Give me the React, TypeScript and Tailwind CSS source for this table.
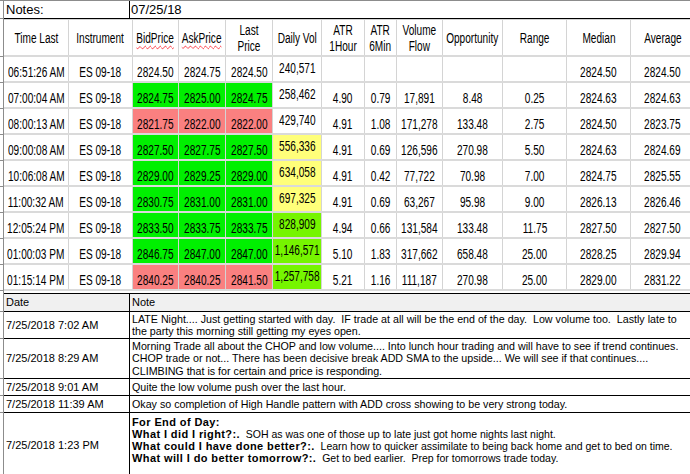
import React from 'react';

type Tone = 'none' | 'up' | 'down';
type VolTone = 'none' | 'warm' | 'hot';

interface Quote {
  time: string;
  bid: string;
  ask: string;
  last: string;
  vol: string;
  atr1: string;
  atr6: string;
  flow: string;
  opp: string;
  range: string;
  median: string;
  avg: string;
  tone: Tone;
  volTone: VolTone;
}

const quotes: Quote[] = [
  { time: '06:51:26 AM', bid: '2824.50', ask: '2824.75', last: '2824.50', vol: '240,571', atr1: '', atr6: '', flow: '', opp: '', range: '', median: '2824.50', avg: '2824.50', tone: 'none', volTone: 'none' },
  { time: '07:00:04 AM', bid: '2824.75', ask: '2825.00', last: '2824.75', vol: '258,462', atr1: '4.90', atr6: '0.79', flow: '17,891', opp: '8.48', range: '0.25', median: '2824.63', avg: '2824.63', tone: 'up', volTone: 'none' },
  { time: '08:00:13 AM', bid: '2821.75', ask: '2822.00', last: '2822.00', vol: '429,740', atr1: '4.91', atr6: '1.08', flow: '171,278', opp: '133.48', range: '2.75', median: '2824.50', avg: '2823.75', tone: 'down', volTone: 'none' },
  { time: '09:00:08 AM', bid: '2827.50', ask: '2827.75', last: '2827.50', vol: '556,336', atr1: '4.91', atr6: '0.69', flow: '126,596', opp: '270.98', range: '5.50', median: '2824.63', avg: '2824.69', tone: 'up', volTone: 'warm' },
  { time: '10:06:08 AM', bid: '2829.00', ask: '2829.25', last: '2829.00', vol: '634,058', atr1: '4.91', atr6: '0.42', flow: '77,722', opp: '70.98', range: '7.00', median: '2824.75', avg: '2825.55', tone: 'up', volTone: 'warm' },
  { time: '11:00:32 AM', bid: '2830.75', ask: '2831.00', last: '2831.00', vol: '697,325', atr1: '4.91', atr6: '0.69', flow: '63,267', opp: '95.98', range: '9.00', median: '2826.13', avg: '2826.46', tone: 'up', volTone: 'warm' },
  { time: '12:05:24 PM', bid: '2833.50', ask: '2833.75', last: '2833.75', vol: '828,909', atr1: '4.94', atr6: '0.66', flow: '131,584', opp: '133.48', range: '11.75', median: '2827.50', avg: '2827.50', tone: 'up', volTone: 'hot' },
  { time: '01:00:03 PM', bid: '2846.75', ask: '2847.00', last: '2847.00', vol: '1,146,571', atr1: '5.10', atr6: '1.83', flow: '317,662', opp: '658.48', range: '25.00', median: '2828.25', avg: '2829.94', tone: 'up', volTone: 'hot' },
  { time: '01:15:14 PM', bid: '2840.25', ask: '2840.25', last: '2841.50', vol: '1,257,758', atr1: '5.21', atr6: '1.16', flow: '111,187', opp: '270.98', range: '25.00', median: '2829.00', avg: '2831.22', tone: 'down', volTone: 'hot' },
];

const toneBg: Record<Tone, string> = { none: 'bg-white', up: 'bg-[#00f000]', down: 'bg-[#fa8080]' };
const volBg: Record<VolTone, string> = { none: 'bg-white', warm: 'bg-[#ffff7a]', hot: 'bg-[#76f500]' };

// column widths of the quote grid, left to right
const cols = ['w-[65px]', 'w-[64px]', 'w-[46px]', 'w-[47px]', 'w-[47px]', 'w-[49px]', 'w-[43px]', 'w-[32px]', 'w-[46px]', 'w-[60px]', 'w-[64px]', 'w-[64px]', 'w-[64px]'];

// the pasted grid is squashed sideways, so the text is narrowed the same way
function Narrow({ children, className = '' }: { children: React.ReactNode; className?: string }) {
  return <span className={`inline-block origin-center scale-x-[0.72] whitespace-nowrap ${className}`}>{children}</span>;
}

function Line({ outer = '', inner = '', tick = true, children }: { outer?: string; inner?: string; tick?: boolean; children?: React.ReactNode }) {
  return (
    <div className={`flex shrink-0 ${outer}`}>
      <div className={`w-[4px] shrink-0 border-r border-[#8c8c8c] ${tick ? 'border-b' : ''}`} />
      <div className={`flex min-w-0 flex-1 ${inner}`}>{children}</div>
    </div>
  );
}

function HeadCell({ w, children }: { w: string; children: React.ReactNode }) {
  return (
    <div className={`${w} flex shrink-0 items-center justify-center border-r border-[#d4d4d4] text-center text-[14px] leading-[16px]`}>
      <Narrow>{children}</Narrow>
    </div>
  );
}

function Cell({ w, bg = 'bg-white', mid = false, children }: { w: string; bg?: string; mid?: boolean; children: React.ReactNode }) {
  return (
    <div className={`${w} ${bg} flex shrink-0 justify-center border-r border-[#d4d4d4] text-[14px] leading-[16px] ${mid ? 'items-center pb-[2px]' : 'items-end pb-[1px]'}`}>
      <Narrow>{children}</Narrow>
    </div>
  );
}

function Note({ children }: { children: React.ReactNode }) {
  return <div className="whitespace-pre">{children}</div>;
}

export default function App() {
  return (
    <div className="h-[474px] w-[690px] overflow-hidden bg-white font-['Liberation_Sans',Arial,sans-serif] text-black">
      {/* Notes title */}
      <Line outer="h-[19px] border-t border-[#8c8c8c]" inner="border-b border-black">
        <div className="flex w-[126px] shrink-0 items-center border-r border-black pl-[2px] text-[13px]">Notes:</div>
        <div className="flex flex-1 items-center pl-[1px] text-[13px]">07/25/18</div>
      </Line>

      {/* Quote grid header */}
      <Line outer="h-[38px]" inner="border-t border-b-2 border-t-[#d4d4d4] border-b-[#dadada]">
        <HeadCell w={cols[0]}>Time Last</HeadCell>
        <HeadCell w={cols[1]}>Instrument</HeadCell>
        <HeadCell w={cols[2]}>
          <span className="underline decoration-red-500 decoration-wavy decoration-1 underline-offset-2">BidPrice</span>
        </HeadCell>
        <HeadCell w={cols[3]}>
          <span className="underline decoration-red-500 decoration-wavy decoration-1 underline-offset-2">AskPrice</span>
        </HeadCell>
        <HeadCell w={cols[4]}>Last<br />Price</HeadCell>
        <HeadCell w={cols[5]}>Daily Vol</HeadCell>
        <HeadCell w={cols[6]}>ATR<br />1Hour</HeadCell>
        <HeadCell w={cols[7]}>ATR<br />6Min</HeadCell>
        <HeadCell w={cols[8]}>Volume<br />Flow</HeadCell>
        <HeadCell w={cols[9]}>Opportunity</HeadCell>
        <HeadCell w={cols[10]}>Range</HeadCell>
        <HeadCell w={cols[11]}>Median</HeadCell>
        <HeadCell w={cols[12]}>Average</HeadCell>
      </Line>

      {quotes.map((q) => (
        <Line key={q.time} outer="h-[26px]" inner="border-b-2 border-[#dadada]">
          <Cell w={cols[0]}>{q.time}</Cell>
          <Cell w={cols[1]}>ES 09-18</Cell>
          <Cell w={cols[2]} bg={toneBg[q.tone]}>{q.bid}</Cell>
          <Cell w={cols[3]} bg={toneBg[q.tone]}>{q.ask}</Cell>
          <Cell w={cols[4]} bg={toneBg[q.tone]}>{q.last}</Cell>
          <Cell w={cols[5]} bg={volBg[q.volTone]} mid>{q.vol}</Cell>
          <Cell w={cols[6]}>{q.atr1}</Cell>
          <Cell w={cols[7]}>{q.atr6}</Cell>
          <Cell w={cols[8]}>{q.flow}</Cell>
          <Cell w={cols[9]}>{q.opp}</Cell>
          <Cell w={cols[10]}>{q.range}</Cell>
          <Cell w={cols[11]}>{q.median}</Cell>
          <Cell w={cols[12]}>{q.avg}</Cell>
        </Line>
      ))}

      <Line outer="h-[2px]" tick={false} />

      {/* Journal notes */}
      <Line outer="h-[19px]" inner="border-y border-black bg-[#f0f0f0] text-[11px]">
        <div className="flex w-[126px] shrink-0 items-center border-r border-black pl-[2px]">Date</div>
        <div className="flex flex-1 items-center pl-[2px]">Note</div>
      </Line>

      <Line outer="h-[27px]" inner="border-b border-black">
        <div className="flex w-[126px] shrink-0 items-center border-r border-black pl-[2px] text-[11px]">7/25/2018 7:02 AM</div>
        <div className="flex min-w-0 flex-1 flex-col justify-center overflow-hidden pl-[2px] text-[10.7px] leading-[12.5px]">
          <Note>LATE Night.... Just getting started with day.  IF trade at all will be the end of the day.  Low volume too.  Lastly late to</Note>
          <Note>the party this morning still getting my eyes open.</Note>
        </div>
      </Line>

      <Line outer="h-[40px]" inner="border-b border-black">
        <div className="flex w-[126px] shrink-0 items-center border-r border-black pl-[2px] text-[11px]">7/25/2018 8:29 AM</div>
        <div className="flex min-w-0 flex-1 flex-col justify-center overflow-hidden pl-[2px] text-[10.7px] leading-[12.5px]">
          <Note>Morning Trade all about the CHOP and low volume.... Into lunch hour trading and will have to see if trend continues.</Note>
          <Note>CHOP trade or not... There has been decisive break ADD SMA to the upside... We will see if that continues....</Note>
          <Note>CLIMBING that is for certain and price is responding.</Note>
        </div>
      </Line>

      <Line outer="h-[17px]" inner="border-b border-black">
        <div className="flex w-[126px] shrink-0 items-center border-r border-black pl-[2px] text-[11px]">7/25/2018 9:01 AM</div>
        <div className="flex min-w-0 flex-1 items-center overflow-hidden pl-[2px] text-[10.7px]">
          <Note>Quite the low volume push over the last hour.</Note>
        </div>
      </Line>

      <Line outer="h-[17px]" inner="border-b border-black">
        <div className="flex w-[126px] shrink-0 items-center border-r border-black pl-[2px] text-[11px]">7/25/2018 11:39 AM</div>
        <div className="flex min-w-0 flex-1 items-center overflow-hidden pl-[2px] text-[10.7px]">
          <Note>Okay so completion of High Handle pattern with ADD cross showing to be very strong today.</Note>
        </div>
      </Line>

      <Line outer="h-[66px]" inner="border-b border-black">
        <div className="flex w-[126px] shrink-0 items-center border-r border-black pl-[2px] text-[11px]">7/25/2018 1:23 PM</div>
        <div className="flex min-w-0 flex-1 flex-col justify-center overflow-hidden pl-[2px] text-[10.5px] leading-[12px]">
          <Note><b className="text-[11px] tracking-[0.4px]">For End of Day:</b></Note>
          <Note><b className="text-[11px] tracking-[0.4px]">What I did I right?:.</b>  SOH as was one of those up to late just got home nights last night.</Note>
          <Note><b className="text-[11px] tracking-[0.4px]">What could I have done better?:.</b>  Learn how to quicker assimilate to being back home and get to bed on time.</Note>
          <Note><b className="text-[11px] tracking-[0.4px]">What will I do better tomorrow?:.</b>  Get to bed earlier.  Prep for tomorrows trade today.</Note>
          <Note> </Note>
        </div>
      </Line>
    </div>
  );
}
